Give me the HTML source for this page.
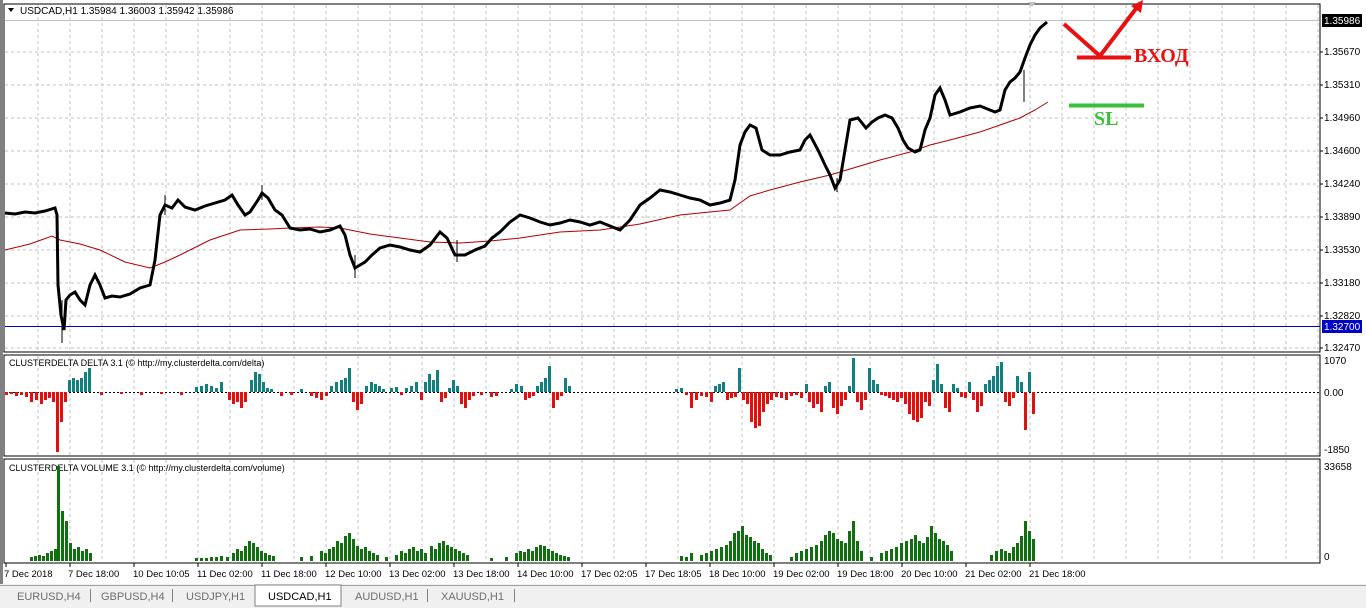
<!DOCTYPE html>
<html><head><meta charset="utf-8"><style>
html,body{margin:0;padding:0;width:1366px;height:608px;overflow:hidden;background:#fff;font-family:"Liberation Sans",sans-serif;}
svg{position:absolute;left:0;top:0}
</style></head><body>
<svg width="1366" height="608" viewBox="0 0 1366 608" xmlns="http://www.w3.org/2000/svg" font-family="Liberation Sans, sans-serif">
<rect x="0" y="0" width="1366" height="608" fill="#fff"/>
<rect x="0" y="0" width="3" height="584" fill="#808080"/>
<rect x="4" y="4" width="1316" height="348" fill="none" stroke="#000" stroke-width="1"/>
<rect x="4" y="355" width="1316" height="101" fill="none" stroke="#000" stroke-width="1"/>
<rect x="4" y="459" width="1316" height="104" fill="none" stroke="#000" stroke-width="1"/>
<g stroke="#c0c0c0" stroke-dasharray="3,3" stroke-width="1">
<path d="M38 5V351M70 5V351M102 5V351M134 5V351M166 5V351M198 5V351M230 5V351M262 5V351M294 5V351M326 5V351M358 5V351M390 5V351M422 5V351M454 5V351M486 5V351M518 5V351M550 5V351M582 5V351M614 5V351M646 5V351M678 5V351M710 5V351M742 5V351M774 5V351M806 5V351M838 5V351M870 5V351M902 5V351M934 5V351M966 5V351M998 5V351M1030 5V351M1062 5V351M1094 5V351M1126 5V351M1158 5V351M1190 5V351M1222 5V351M1254 5V351M1286 5V351M1318 5V351"/>
<path d="M5 52H1319M5 85H1319M5 118H1319M5 151H1319M5 184H1319M5 217H1319M5 250H1319M5 283H1319M5 316H1319M5 348H1319"/>
<g transform="translate(0,351)"><path d="M38 5V104M70 5V104M102 5V104M134 5V104M166 5V104M198 5V104M230 5V104M262 5V104M294 5V104M326 5V104M358 5V104M390 5V104M422 5V104M454 5V104M486 5V104M518 5V104M550 5V104M582 5V104M614 5V104M646 5V104M678 5V104M710 5V104M742 5V104M774 5V104M806 5V104M838 5V104M870 5V104M902 5V104M934 5V104M966 5V104M998 5V104M1030 5V104M1062 5V104M1094 5V104M1126 5V104M1158 5V104M1190 5V104M1222 5V104M1254 5V104M1286 5V104M1318 5V104"/></g>
<g transform="translate(0,455)"><path d="M38 5V107M70 5V107M102 5V107M134 5V107M166 5V107M198 5V107M230 5V107M262 5V107M294 5V107M326 5V107M358 5V107M390 5V107M422 5V107M454 5V107M486 5V107M518 5V107M550 5V107M582 5V107M614 5V107M646 5V107M678 5V107M710 5V107M742 5V107M774 5V107M806 5V107M838 5V107M870 5V107M902 5V107M934 5V107M966 5V107M998 5V107M1030 5V107M1062 5V107M1094 5V107M1126 5V107M1158 5V107M1190 5V107M1222 5V107M1254 5V107M1286 5V107M1318 5V107"/></g>
</g>
<line x1="5" y1="20.5" x2="1319" y2="20.5" stroke="#c0c0c0"/>
<line x1="5" y1="326.5" x2="1320" y2="326.5" stroke="#0000c8"/>
<polyline fill="none" stroke="#b00000" stroke-width="1" points="5,250 30,244 52,236 60,240 80,244 100,250 125,262 150,268 165,262 180,255 210,240 240,230 270,229 290,228 320,227 340,228 370,234 400,238 430,242 460,243 490,241 520,238 560,232 600,230 640,224 680,215 710,212 730,210 750,196 770,190 800,182 830,175 860,166 880,160 910,152 930,145 950,140 980,132 1000,125 1020,118 1035,110 1048,102"/>
<polyline fill="none" stroke="#000" stroke-width="3" points="5,213 15,214 25,212 35,213 45,211 55,208 57,215 58,285 61,315 64,330 66,300 70,295 75,292 80,300 85,305 90,285 95,275 100,285 105,298 112,296 120,297 130,294 140,288 150,285 155,260 160,215 165,205 172,208 178,200 185,207 195,210 205,206 215,203 225,200 232,195 238,205 245,215 250,212 258,200 262,193 268,198 275,210 282,215 290,228 300,230 310,229 320,232 330,230 340,226 345,235 350,255 355,268 360,265 365,262 372,255 380,248 390,245 400,247 410,250 420,252 430,245 440,232 447,238 455,255 465,255 475,250 485,246 492,238 500,232 510,222 520,215 530,218 540,222 550,225 560,223 570,220 580,222 590,225 600,222 610,226 620,230 630,220 640,205 650,198 660,190 670,192 680,195 690,198 700,200 710,205 720,203 730,200 735,180 740,145 745,132 750,125 756,128 762,150 770,155 780,155 790,152 800,150 805,140 810,135 818,150 825,165 830,175 835,188 840,180 845,150 850,120 858,118 866,128 872,122 878,118 885,115 892,118 898,128 903,140 908,148 915,152 920,150 925,130 930,118 935,95 940,88 945,100 950,115 960,112 970,108 980,106 990,110 995,112 1000,110 1005,90 1010,82 1015,78 1020,72 1025,58 1030,45 1035,35 1040,28 1047,22"/>
<g stroke="#000" stroke-width="1"><path d="M62 300V343M1024 70V102M837 178V192M355 255V278M457 240V262M165 195V215M262 185V200"/></g>
<path d="M1028 2 l8 0 -4 5z" fill="#c0c0c0"/>
<path d="M1064 24 L1100 56 L1138 6" fill="none" stroke="#e81010" stroke-width="4"/>
<path d="M1143 0 L1131 6 L1141 13 Z" fill="#e81010"/>
<line x1="1077" y1="57.5" x2="1131" y2="57.5" stroke="#e81010" stroke-width="4"/>
<text x="1134" y="62" font-family="Liberation Serif, serif" font-weight="bold" font-size="20" fill="#e81010">ВХОД</text>
<line x1="1069" y1="105.5" x2="1144" y2="105.5" stroke="#38c038" stroke-width="4"/>
<text x="1094" y="125" font-family="Liberation Serif, serif" font-weight="bold" font-size="20" fill="#38c038">SL</text>
<path d="M8 8 h6 l-3 4z" fill="#000"/>
<text x="20" y="14" font-size="10" fill="#000">USDCAD,H1  1.35984 1.36003 1.35942 1.35986</text>
<text x="9" y="366" font-size="9" fill="#000">CLUSTERDELTA DELTA 3.1 (© http://my.clusterdelta.com/delta)</text>
<text x="9" y="471" font-size="9" fill="#000">CLUSTERDELTA VOLUME 3.1 (© http://my.clusterdelta.com/volume)</text>
<g font-size="10" fill="#000">
<text x="1324" y="55">1.35670</text>
<text x="1324" y="88">1.35310</text>
<text x="1324" y="121">1.34960</text>
<text x="1324" y="154">1.34600</text>
<text x="1324" y="187">1.34240</text>
<text x="1324" y="220">1.33890</text>
<text x="1324" y="253">1.33530</text>
<text x="1324" y="286">1.33180</text>
<text x="1324" y="319">1.32820</text>
<text x="1324" y="351">1.32470</text>
<text x="1324" y="364">1070</text>
<text x="1324" y="396">0.00</text>
<text x="1324" y="453">-1850</text>
<text x="1324" y="470">33658</text>
<text x="1324" y="560">0</text>
</g>
<g stroke="#000"><path d="M1320 52h3M1320 85h3M1320 118h3M1320 151h3M1320 184h3M1320 217h3M1320 250h3M1320 283h3M1320 316h3M1320 348h3"/></g>
<rect x="1322" y="14" width="40" height="13" fill="#000"/>
<text x="1324" y="24" font-size="10" fill="#fff">1.35986</text>
<rect x="1322" y="320" width="40" height="13" fill="#0000c8"/>
<text x="1324" y="330" font-size="10" fill="#fff">1.32700</text>
<line x1="5" y1="392.5" x2="1319" y2="392.5" stroke="#000" stroke-dasharray="2,2"/>
<path fill="#e01010" d="M5 392v3h3v-3zM10 392v2h3v-2zM15 392v4h3v-4zM20 392v3h3v-3zM25 392v5h3v-5zM30 392v10h3v-10zM35 392v8h3v-8zM40 392v12h3v-12zM44 392v8h3v-8zM48 392v6h3v-6zM52 392v10h3v-10zM56 392v60h3v-60zM60 392v30h3v-30zM64 392v10h3v-10zM100 392v3h3v-3zM120 392v2h3v-2zM140 392v3h3v-3zM160 392v2h3v-2zM180 392v3h3v-3zM228 392v8h3v-8zM232 392v12h3v-12zM236 392v10h3v-10zM240 392v16h3v-16zM244 392v10h3v-10zM280 392v4h3v-4zM290 392v3h3v-3zM310 392v4h3v-4zM315 392v6h3v-6zM320 392v8h3v-8zM325 392v4h3v-4zM352 392v10h3v-10zM356 392v18h3v-18zM360 392v12h3v-12zM400 392v3h3v-3zM420 392v8h3v-8zM440 392v10h3v-10zM444 392v6h3v-6zM460 392v12h3v-12zM464 392v16h3v-16zM468 392v8h3v-8zM472 392v4h3v-4zM480 392v3h3v-3zM490 392v5h3v-5zM495 392v4h3v-4zM524 392v8h3v-8zM528 392v6h3v-6zM532 392v4h3v-4zM552 392v16h3v-16zM556 392v8h3v-8zM560 392v4h3v-4zM685 392v3h3v-3zM690 392v16h3v-16zM695 392v8h3v-8zM700 392v4h3v-4zM705 392v5h3v-5zM710 392v10h3v-10zM726 392v8h3v-8zM730 392v6h3v-6zM734 392v5h3v-5zM742 392v8h3v-8zM746 392v12h3v-12zM750 392v30h3v-30zM754 392v36h3v-36zM758 392v34h3v-34zM762 392v20h3v-20zM766 392v12h3v-12zM770 392v8h3v-8zM775 392v5h3v-5zM780 392v6h3v-6zM785 392v8h3v-8zM790 392v4h3v-4zM795 392v3h3v-3zM800 392v6h3v-6zM808 392v10h3v-10zM812 392v16h3v-16zM816 392v12h3v-12zM820 392v20h3v-20zM832 392v16h3v-16zM836 392v22h3v-22zM840 392v14h3v-14zM844 392v8h3v-8zM856 392v10h3v-10zM860 392v18h3v-18zM864 392v8h3v-8zM880 392v3h3v-3zM884 392v4h3v-4zM888 392v6h3v-6zM892 392v8h3v-8zM896 392v10h3v-10zM900 392v6h3v-6zM904 392v12h3v-12zM908 392v22h3v-22zM912 392v28h3v-28zM916 392v30h3v-30zM920 392v26h3v-26zM924 392v10h3v-10zM928 392v14h3v-14zM944 392v16h3v-16zM948 392v20h3v-20zM960 392v5h3v-5zM964 392v6h3v-6zM972 392v8h3v-8zM976 392v20h3v-20zM980 392v14h3v-14zM1004 392v10h3v-10zM1008 392v14h3v-14zM1012 392v6h3v-6zM1024 392v38h3v-38zM1032 392v22h3v-22z"/>
<path fill="#108080" d="M68 392v-12h3v12zM72 392v-14h3v14zM76 392v-12h3v12zM80 392v-14h3v14zM84 392v-20h3v20zM88 392v-24h3v24zM195 392v-5h3v5zM200 392v-6h3v6zM205 392v-8h3v8zM210 392v-6h3v6zM215 392v-4h3v4zM220 392v-10h3v10zM250 392v-12h3v12zM254 392v-20h3v20zM258 392v-18h3v18zM262 392v-10h3v10zM266 392v-4h3v4zM270 392v-3h3v3zM300 392v-3h3v3zM330 392v-6h3v6zM335 392v-10h3v10zM340 392v-12h3v12zM344 392v-14h3v14zM348 392v-24h3v24zM365 392v-6h3v6zM370 392v-10h3v10zM374 392v-8h3v8zM378 392v-6h3v6zM382 392v-3h3v3zM390 392v-4h3v4zM395 392v-5h3v5zM405 392v-4h3v4zM410 392v-6h3v6zM415 392v-10h3v10zM424 392v-10h3v10zM428 392v-18h3v18zM432 392v-12h3v12zM436 392v-22h3v22zM448 392v-4h3v4zM452 392v-12h3v12zM456 392v-6h3v6zM510 392v-3h3v3zM515 392v-8h3v8zM520 392v-6h3v6zM536 392v-6h3v6zM540 392v-10h3v10zM544 392v-14h3v14zM548 392v-26h3v26zM564 392v-14h3v14zM568 392v-6h3v6zM675 392v-3h3v3zM680 392v-4h3v4zM714 392v-6h3v6zM718 392v-8h3v8zM722 392v-10h3v10zM738 392v-24h3v24zM805 392v-8h3v8zM824 392v-6h3v6zM828 392v-10h3v10zM848 392v-6h3v6zM852 392v-34h3v34zM868 392v-24h3v24zM872 392v-12h3v12zM876 392v-8h3v8zM932 392v-12h3v12zM936 392v-28h3v28zM940 392v-8h3v8zM952 392v-8h3v8zM956 392v-4h3v4zM968 392v-10h3v10zM984 392v-8h3v8zM988 392v-12h3v12zM992 392v-16h3v16zM996 392v-26h3v26zM1000 392v-30h3v30zM1016 392v-16h3v16zM1020 392v-10h3v10zM1028 392v-20h3v20z"/>
<path fill="#107010" d="M30 561v-4h3v4zM34 561v-5h3v5zM38 561v-6h3v6zM42 561v-5h3v5zM46 561v-8h3v8zM50 561v-10h3v10zM54 561v-12h3v12zM57 561v-95h3v95zM61 561v-50h3v50zM65 561v-40h3v40zM69 561v-18h3v18zM73 561v-12h3v12zM77 561v-14h3v14zM81 561v-10h3v10zM85 561v-12h3v12zM89 561v-8h3v8zM195 561v-3h3v3zM200 561v-3h3v3zM205 561v-3h3v3zM210 561v-4h3v4zM215 561v-4h3v4zM220 561v-5h3v5zM226 561v-4h3v4zM232 561v-8h3v8zM236 561v-12h3v12zM240 561v-10h3v10zM244 561v-15h3v15zM248 561v-20h3v20zM252 561v-18h3v18zM256 561v-14h3v14zM260 561v-10h3v10zM264 561v-8h3v8zM268 561v-6h3v6zM272 561v-5h3v5zM300 561v-4h3v4zM310 561v-5h3v5zM320 561v-10h3v10zM324 561v-8h3v8zM328 561v-12h3v12zM332 561v-14h3v14zM336 561v-20h3v20zM340 561v-18h3v18zM344 561v-25h3v25zM348 561v-28h3v28zM352 561v-22h3v22zM356 561v-15h3v15zM360 561v-12h3v12zM364 561v-14h3v14zM368 561v-10h3v10zM372 561v-8h3v8zM376 561v-6h3v6zM385 561v-4h3v4zM395 561v-6h3v6zM400 561v-10h3v10zM404 561v-8h3v8zM408 561v-12h3v12zM412 561v-14h3v14zM416 561v-10h3v10zM420 561v-12h3v12zM424 561v-8h3v8zM430 561v-15h3v15zM434 561v-12h3v12zM438 561v-18h3v18zM442 561v-20h3v20zM446 561v-16h3v16zM450 561v-14h3v14zM454 561v-12h3v12zM458 561v-10h3v10zM462 561v-8h3v8zM466 561v-6h3v6zM490 561v-3h3v3zM505 561v-4h3v4zM515 561v-8h3v8zM519 561v-10h3v10zM523 561v-9h3v9zM527 561v-12h3v12zM531 561v-10h3v10zM535 561v-14h3v14zM539 561v-16h3v16zM543 561v-15h3v15zM547 561v-12h3v12zM551 561v-10h3v10zM555 561v-8h3v8zM559 561v-6h3v6zM563 561v-5h3v5zM567 561v-4h3v4zM680 561v-5h3v5zM685 561v-4h3v4zM690 561v-8h3v8zM700 561v-6h3v6zM705 561v-8h3v8zM710 561v-10h3v10zM715 561v-12h3v12zM720 561v-14h3v14zM725 561v-16h3v16zM729 561v-20h3v20zM733 561v-28h3v28zM737 561v-30h3v30zM741 561v-35h3v35zM745 561v-26h3v26zM749 561v-24h3v24zM753 561v-20h3v20zM757 561v-18h3v18zM761 561v-12h3v12zM765 561v-8h3v8zM769 561v-6h3v6zM790 561v-4h3v4zM795 561v-8h3v8zM800 561v-10h3v10zM805 561v-12h3v12zM810 561v-14h3v14zM815 561v-16h3v16zM820 561v-20h3v20zM824 561v-26h3v26zM828 561v-30h3v30zM832 561v-28h3v28zM836 561v-22h3v22zM840 561v-20h3v20zM844 561v-18h3v18zM848 561v-30h3v30zM852 561v-40h3v40zM856 561v-20h3v20zM860 561v-10h3v10zM870 561v-4h3v4zM880 561v-8h3v8zM885 561v-10h3v10zM890 561v-12h3v12zM895 561v-14h3v14zM900 561v-18h3v18zM905 561v-20h3v20zM910 561v-22h3v22zM914 561v-26h3v26zM918 561v-20h3v20zM922 561v-18h3v18zM926 561v-24h3v24zM930 561v-35h3v35zM934 561v-28h3v28zM938 561v-22h3v22zM942 561v-20h3v20zM946 561v-16h3v16zM950 561v-10h3v10zM990 561v-6h3v6zM995 561v-10h3v10zM1000 561v-12h3v12zM1004 561v-10h3v10zM1008 561v-8h3v8zM1012 561v-14h3v14zM1016 561v-18h3v18zM1020 561v-25h3v25zM1024 561v-40h3v40zM1028 561v-30h3v30zM1032 561v-22h3v22z"/>
<g stroke="#000"><path d="M6 563v4M70 563v4M134 563v4M198 563v4M262 563v4M326 563v4M390 563v4M454 563v4M518 563v4M582 563v4M646 563v4M710 563v4M774 563v4M838 563v4M902 563v4M966 563v4M1030 563v4"/></g>
<g font-size="9.5" fill="#000">
<text x="4" y="577">7 Dec 2018</text>
<text x="68" y="577">7 Dec 18:00</text>
<text x="133" y="577">10 Dec 10:05</text>
<text x="197" y="577">11 Dec 02:00</text>
<text x="261" y="577">11 Dec 18:00</text>
<text x="325" y="577">12 Dec 10:00</text>
<text x="389" y="577">13 Dec 02:00</text>
<text x="453" y="577">13 Dec 18:00</text>
<text x="517" y="577">14 Dec 10:00</text>
<text x="581" y="577">17 Dec 02:05</text>
<text x="645" y="577">17 Dec 18:05</text>
<text x="709" y="577">18 Dec 10:00</text>
<text x="773" y="577">19 Dec 02:00</text>
<text x="837" y="577">19 Dec 18:00</text>
<text x="901" y="577">20 Dec 10:00</text>
<text x="965" y="577">21 Dec 02:00</text>
<text x="1029" y="577">21 Dec 18:00</text>
</g>
<rect x="0" y="584" width="1366" height="24" fill="#f0f0f0"/>
<line x1="0" y1="585.5" x2="1366" y2="585.5" stroke="#a0a0a0"/>
<rect x="255" y="585" width="86" height="21" fill="#fff" stroke="#808080"/>
<g font-size="11" fill="#6d6d6d">
<text x="17" y="600">EURUSD,H4</text>
<text x="101" y="600">GBPUSD,H4</text>
<text x="186" y="600">USDJPY,H1</text>
<text x="355" y="600">AUDUSD,H1</text>
<text x="441" y="600">XAUUSD,H1</text>
</g>
<text x="268" y="600" font-size="11" fill="#000">USDCAD,H1</text>
<g stroke="#808080"><path d="M90.5 589v13M172.5 589v13M427.5 589v13M514.5 589v13"/></g>
</svg>
</body></html>
